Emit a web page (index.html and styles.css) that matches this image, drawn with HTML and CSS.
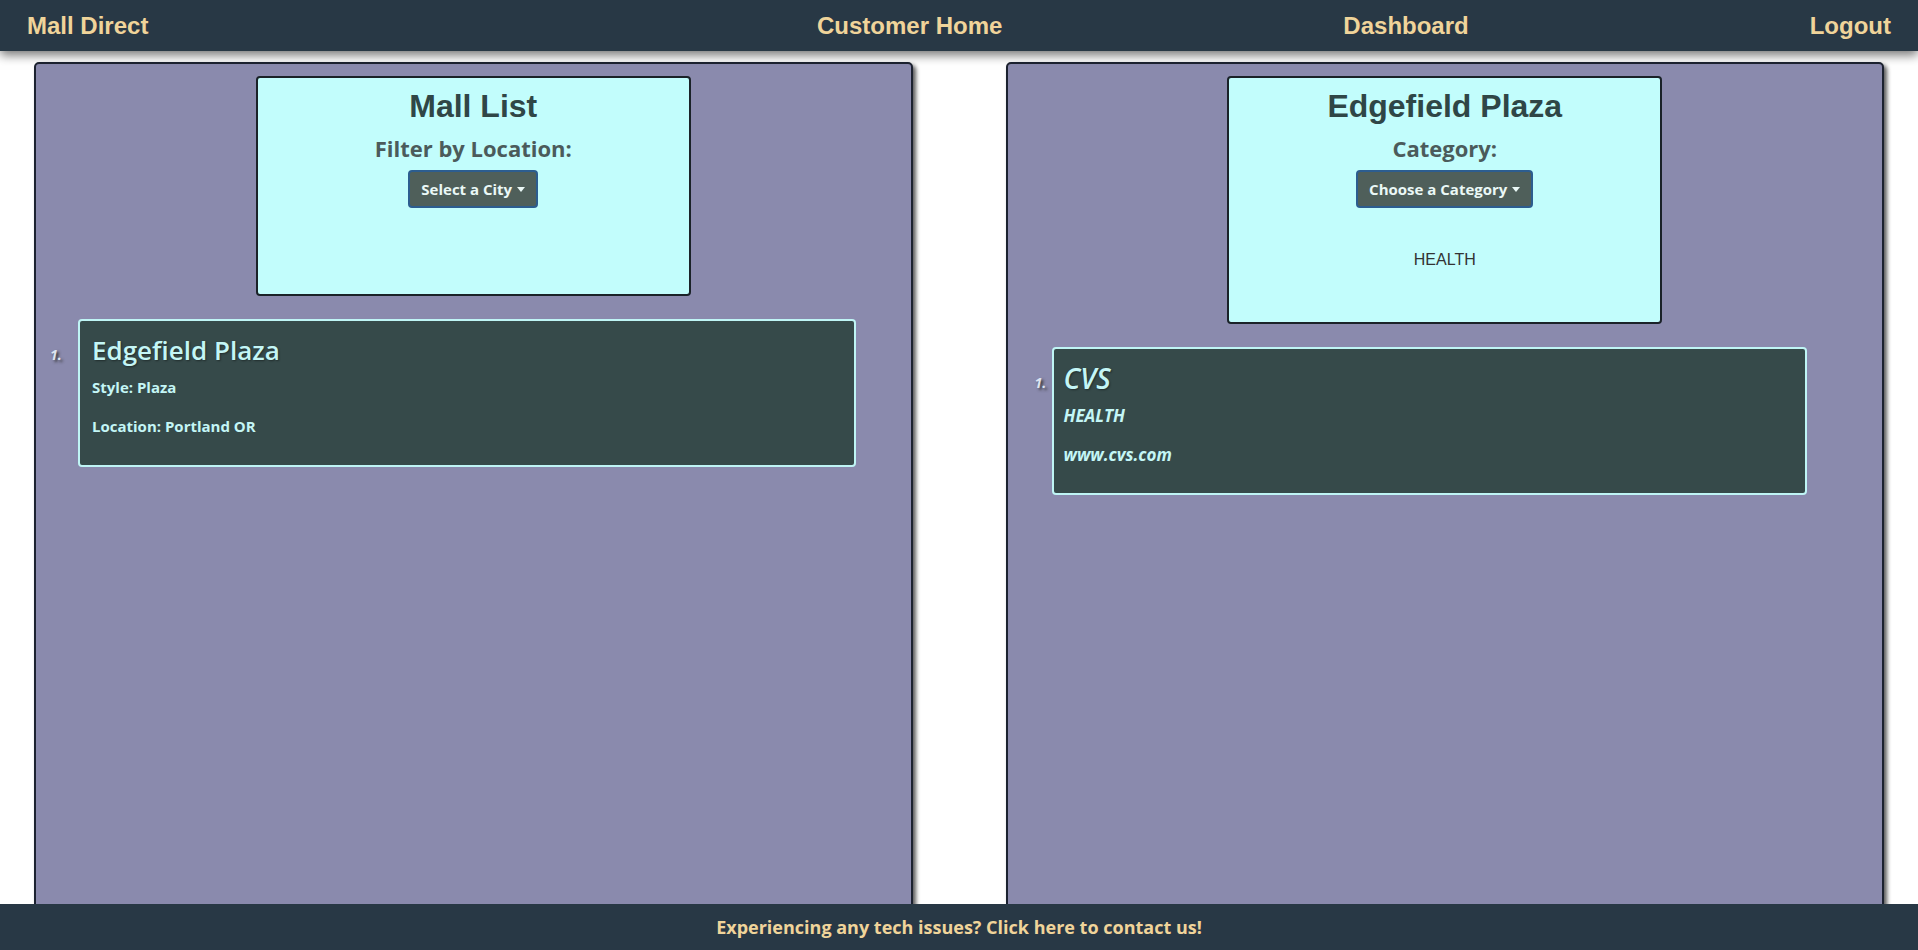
FILE: index.html
```html
<!DOCTYPE html>
<html lang="en">
<head>
<meta charset="utf-8">
<title>Mall Direct</title>
<link rel="stylesheet" href="styles.css">
</head>
<body>
<nav class="topnav">
  <div class="brand">Mall Direct</div>
  <div class="nav-links">
    <span class="nav-link">Customer Home</span>
    <span class="nav-link">Dashboard</span>
    <span class="nav-link">Logout</span>
  </div>
</nav>
<main class="content">
  <section class="panel">
    <div class="head-box">
      <h1 class="head-title">Mall List</h1>
      <h2 class="head-sub">Filter by Location:</h2>
      <button class="drop-btn">Select a City</button>
      <div class="result"></div>
    </div>
    <div class="list list-left">
      <div class="item">
        <span class="num">1.</span>
        <div class="card">
          <h3 class="card-title">Edgefield Plaza</h3>
          <p class="card-line">Style: Plaza</p>
          <p class="card-line">Location: Portland OR</p>
        </div>
      </div>
    </div>
  </section>
  <section class="panel">
    <div class="head-box">
      <h1 class="head-title">Edgefield Plaza</h1>
      <h2 class="head-sub">Category:</h2>
      <button class="drop-btn">Choose a Category</button>
      <div class="result"><p class="result-text">HEALTH</p></div>
    </div>
    <div class="list list-right">
      <div class="item">
        <span class="num">1.</span>
        <div class="card">
          <h3 class="card-title italic">CVS</h3>
          <p class="card-line italic">HEALTH</p>
          <p class="card-line italic">www.cvs.com</p>
        </div>
      </div>
    </div>
  </section>
</main>
<footer class="footer">Experiencing any tech issues? Click here to contact us!</footer>
</body>
</html>
```

FILE: styles.css
```css
html, body {
  margin: 0;
  padding: 0;
  background: #ffffff;
  font-family: "Open Sans", "Noto Sans", sans-serif;
  overflow: hidden;
}

.topnav {
  position: relative;
  z-index: 2;
  height: 51px;
  background: #283845;
  display: flex;
  align-items: center;
  padding: 0 27px;
  box-shadow: 0 4px 10px rgba(0, 0, 0, 0.55);
  font-family: "Liberation Sans", Arial, sans-serif;
  font-weight: bold;
  font-size: 24px;
  color: #f0d49a;
}

.brand {
  width: 790px;
  flex: none;
}

.nav-links {
  flex: 1;
  display: flex;
  justify-content: space-between;
}

.content {
  display: flex;
  gap: 93px;
  padding: 11px 34px 0;
}

.panel {
  flex: 1;
  height: 900px;
  background: #8a8aad;
  border: 2px solid #1c2230;
  border-radius: 5px;
  box-shadow: 3px 3px 4px rgba(0, 0, 0, 0.65);
}

.head-box {
  width: 435px;
  box-sizing: border-box;
  margin: 12px auto 0;
  background: #c2fdfc;
  border: 2px solid #1a2228;
  border-radius: 4px;
  text-align: center;
  padding-top: 9px;
}

.head-title {
  margin: 0;
  font-family: "Liberation Sans", Arial, sans-serif;
  font-weight: bold;
  font-size: 32px;
  line-height: 38px;
  color: #2f4646;
}

.head-sub {
  margin: 10px 0 9px;
  font-weight: 700;
  font-size: 22px;
  line-height: 26px;
  color: #4b5b5b;
}

.drop-btn {
  height: 38px;
  box-sizing: border-box;
  padding: 0 11px;
  background: #4f5f5a;
  border: 2px solid #2c5d8f;
  border-radius: 4px;
  color: #eaf8f6;
  font-family: "Open Sans", "Noto Sans", sans-serif;
  font-weight: 700;
  font-size: 15px;
  cursor: pointer;
}

.drop-btn::after {
  content: "";
  display: inline-block;
  margin-left: 5px;
  vertical-align: 3px;
  border-top: 5px solid #eaf8f6;
  border-left: 4px solid transparent;
  border-right: 4px solid transparent;
}

.result {
  padding: 38px 0 48px;
}

.result-text {
  margin: 0;
  font-family: "Liberation Sans", Arial, sans-serif;
  font-size: 16px;
  line-height: 28px;
  color: #333333;
}

.list {
  margin-top: 23px;
}

.list-left {
  padding-left: 14px;
  padding-right: 55px;
}

.list-right {
  padding-left: 27px;
  padding-right: 75px;
}

.item {
  display: flex;
}

.num {
  flex: none;
  margin-top: 26px;
  line-height: 20px;
  font-weight: 700;
  font-style: italic;
  font-size: 14px;
  color: #dde4f0;
  text-shadow: 2px 2px 3px #333;
}

.list-left .num {
  width: 28px;
}

.list-right .num {
  width: 17px;
}

.card {
  flex: 1;
  background: #364a4a;
  border: 2px solid #bff5f5;
  border-radius: 4px;
  padding: 12px 12px 10px;
  color: #c4f6f6;
}

.list-right .card {
  padding-left: 10px;
}

.card-title {
  margin: 0 0 10px;
  font-weight: 600;
  font-size: 26px;
  line-height: 34px;
  text-shadow: 1px 1px 2px rgba(0, 0, 0, 0.4);
}

.card-line {
  margin: 0 0 18px;
  font-weight: 700;
  font-size: 15px;
  line-height: 21px;
}

.list-right .card-title {
  font-size: 28px;
}

.list-right .card-line {
  font-size: 17px;
}

.italic {
  font-style: italic;
}

.footer {
  position: fixed;
  left: 0;
  right: 0;
  bottom: 0;
  height: 46px;
  line-height: 46px;
  background: #283845;
  text-align: center;
  font-weight: 700;
  font-size: 18px;
  color: #f0d49a;
}
```
